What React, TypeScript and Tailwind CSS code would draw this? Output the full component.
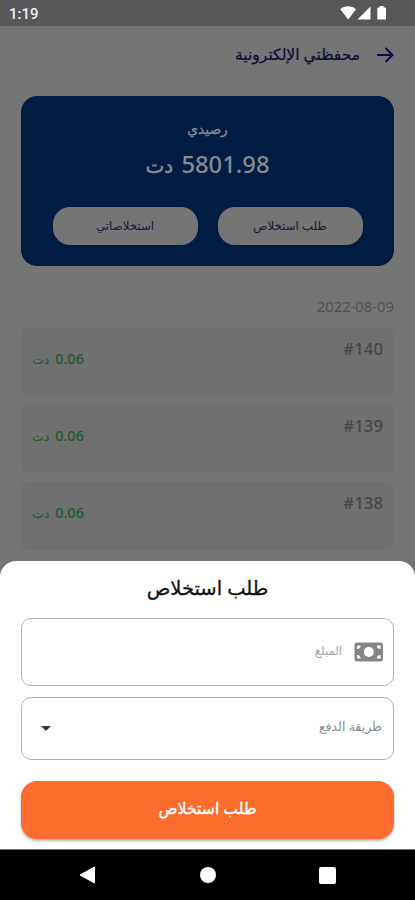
import type { ReactNode } from "react";

interface Transaction {
  id: number;
  amount: string;
}

const transactions: Transaction[] = [
  { id: 140, amount: "0.06" },
  { id: 139, amount: "0.06" },
  { id: 138, amount: "0.06" },
];

function StatusBar() {
  return (
    <div
      dir="ltr"
      className="flex h-[26px] shrink-0 items-center justify-between bg-[#575757] pr-[27px] pl-[9px] font-['Roboto',sans-serif] text-[15px] font-medium text-[#eeeeee]"
    >
      <span className="pt-[2px] leading-none">1:19</span>
      <svg width="48" height="16" viewBox="0 0 48 16" fill="#fff">
        <path d="M0.3 4.2C4.8 .4 11.5 .4 16 4.2L8.2 14.6Z" />
        <path d="M30.5 1.5V14.5H17.5Z" />
        <path d="M37.3 3.4Q37.3 2.6 38 2.6H39.7V1H43.6V2.6H45.3Q46 2.6 46 3.4V14.6H37.3Z" />
      </svg>
    </div>
  );
}

function PillButton({ children }: { children: ReactNode }) {
  return (
    <button className="flex h-[38px] w-[145px] items-center justify-center rounded-[17px] bg-[#757575] text-[11.8px] text-[#17173a]">
      {children}
    </button>
  );
}

function BalanceCard() {
  return (
    <div className="mx-[21px] flex h-[170px] shrink-0 flex-col items-center rounded-[16px] bg-[#001c43] text-[#858a92]">
      <div className="mt-[22px] text-[13.8px] leading-[22px] [-webkit-text-stroke:0.3px]">رصيدي</div>
      <div className="mt-[9px] h-[31px] text-[23.8px] leading-[31px] font-medium">
        5801.98 <span className="mr-[2px] text-[20px] [-webkit-text-stroke:0.5px]">دت</span>
      </div>
      <div className="mt-[27px] flex gap-[20px]">
        <PillButton>طلب استخلاص</PillButton>
        <PillButton>استخلاصاتي</PillButton>
      </div>
    </div>
  );
}

function TransactionRow({ id, amount }: Transaction) {
  return (
    <div className="flex h-[68px] justify-between rounded-[8px] bg-[#707070] px-[11px]">
      <span dir="ltr" className="pt-[9px] text-[16.8px] leading-[24px] font-medium text-[#454545]">
        #{id}
      </span>
      <span className="pt-[19px] text-[14.5px] leading-[22px] font-medium text-[#215b2b]">
        {amount} <span className="mr-[2px] text-[12.5px]">دت</span>
      </span>
    </div>
  );
}

function WithdrawSheet() {
  return (
    <div className="absolute inset-x-0 top-[561px] flex h-[289px] flex-col rounded-t-[16px] border-b border-[#777] bg-white px-[21px]">
      <h2 className="mt-[12px] text-center text-[19.5px] leading-[30px] text-[#111] [-webkit-text-stroke:0.3px]">
        طلب استخلاص
      </h2>
      <div className="mt-[15px] flex h-[68px] items-center rounded-[10px] border border-[#b3b3b3] pr-[9px]">
        <svg width="30" height="20" viewBox="0 0 30 20">
          <rect x="0.5" y="0.5" width="28.5" height="19" rx="2.5" fill="#858585" />
          <circle cx="14.8" cy="10" r="5.1" fill="#fff" />
          <g fill="#fff">
            <path d="M3 3.5H6.6A3.6 3.6 0 0 1 3 7.1Z" />
            <path d="M26.5 3.5H22.9A3.6 3.6 0 0 0 26.5 7.1Z" />
            <path d="M3 16.5H6.6A3.6 3.6 0 0 0 3 12.9Z" />
            <path d="M26.5 16.5H22.9A3.6 3.6 0 0 1 26.5 12.9Z" />
          </g>
        </svg>
        <span className="mr-[12px] pb-[2px] text-[11.7px] text-[#a3a3a3]">المبلغ</span>
      </div>
      <div className="mt-[11px] flex h-[63px] items-center justify-between rounded-[10px] border border-[#b3b3b3] pr-[11px] pl-[19px]">
        <span className="pb-[2px] text-[12.5px] text-[#8c8c8c]">طريقة الدفع</span>
        <svg width="10" height="5" viewBox="0 0 10 5">
          <path d="M0 0H10L5 5Z" fill="#333" />
        </svg>
      </div>
      <button className="mt-[21px] flex h-[58px] items-center justify-center rounded-[16px] bg-[#fc6c2d] pb-[2px] text-[15.7px] text-white shadow-[0_2px_3px_rgba(0,0,0,0.3)] [-webkit-text-stroke:0.4px]">
        طلب استخلاص
      </button>
    </div>
  );
}

function NavBar() {
  return (
    <div dir="ltr" className="absolute inset-x-0 bottom-0 flex h-[50px] items-center justify-between bg-black px-[79px]">
      <svg width="17" height="18" viewBox="0 0 17 18">
        <path d="M15.5 1V17L1 9Z" fill="#fff" stroke="#fff" strokeWidth="1" strokeLinejoin="round" />
      </svg>
      <div className="size-[16px] rounded-full bg-white" />
      <div className="size-[17px] rounded-[2px] bg-white" />
    </div>
  );
}

export default function App() {
  return (
    <div
      dir="rtl"
      className="relative flex h-[900px] w-[415px] flex-col overflow-hidden bg-[#757575] font-['Noto_Sans','DejaVu_Sans',sans-serif]"
    >
      <StatusBar />
      <header className="flex h-[58px] shrink-0 items-center gap-[17px] pr-[21px]">
        <svg width="17" height="16" viewBox="0 0 17 16" fill="none" stroke="#0b0b45" strokeWidth="2">
          <path d="M0 8H15.5M8.5 1L15.5 8L8.5 15" />
        </svg>
        <h1 className="text-[15.5px] text-[#0b0b3a] [-webkit-text-stroke:0.2px]">محفظتي الإلكترونية</h1>
      </header>
      <div className="h-[12px] shrink-0" />
      <BalanceCard />
      <div className="mt-[29px] px-[21px] text-[14.8px] leading-[22px] text-[#505050]">2022-08-09</div>
      <div className="mt-[11px] flex flex-col gap-[9px] px-[21px]">
        {transactions.map((item) => (
          <TransactionRow key={item.id} {...item} />
        ))}
      </div>
      <WithdrawSheet />
      <NavBar />
    </div>
  );
}
